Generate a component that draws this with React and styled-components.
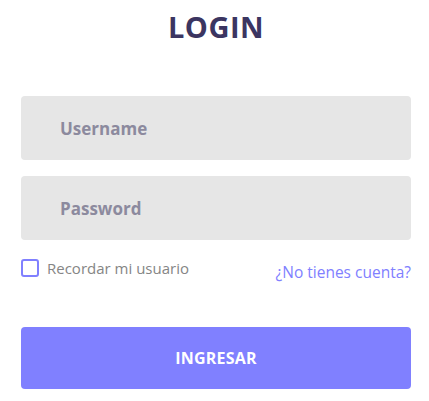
import React from "react";
import styled, { createGlobalStyle } from "styled-components";

const Global = createGlobalStyle`
  html, body { margin: 0; padding: 0; background: #ffffff; }
  body { font-family: "Open Sans", "Noto Sans", sans-serif; }
  * { box-sizing: border-box; }
`;

const Page = styled.div`
  width: 429px;
  padding: 0 18px 0 21px;
  display: flex;
  flex-direction: column;
`;

const Title = styled.h1`
  margin: 9px 0 0;
  text-align: center;
  font-size: 29px;
  line-height: 36px;
  font-weight: 700;
  color: #3b3561;
  letter-spacing: 0.5px;
`;

const Form = styled.form`
  margin-top: 51px;
  display: flex;
  flex-direction: column;
  gap: 16px;
`;

const Input = styled.input`
  width: 100%;
  height: 64px;
  border: none;
  border-radius: 4px;
  background: #e6e6e6;
  padding: 0 0 0 39px;
  font-family: inherit;
  font-size: 17px;
  font-weight: 700;
  color: #55536b;
  outline: none;
  &::placeholder { color: #8c8a9e; opacity: 1; }
`;

const Row = styled.div`
  display: flex;
  justify-content: space-between;
  align-items: flex-start;
  margin-top: 18px;
`;

const CheckLabel = styled.label`
  display: flex;
  align-items: center;
  gap: 8px;
  font-size: 15px;
  color: #858585;
  line-height: 20px;
`;

const Box = styled.span`
  width: 18px;
  height: 18px;
  border: 2px solid #8080ff;
  border-radius: 3px;
  display: inline-block;
`;

const Link = styled.a`
  margin-top: 4px;
  font-size: 15.5px;
  line-height: 20px;
  color: #8080ff;
  text-decoration: none;
`;

const Button = styled.button`
  margin-top: 45px;
  height: 62px;
  width: 100%;
  border: none;
  border-radius: 4px;
  background: #8080ff;
  color: #ffffff;
  font-family: inherit;
  font-size: 16px;
  font-weight: 700;
  letter-spacing: 0.2px;
`;

export default function App() {
  return (
    <>
      <Global />
      <Page>
        <Title>LOGIN</Title>
        <Form onSubmit={(e) => e.preventDefault()}>
          <Input placeholder="Username" />
          <Input placeholder="Password" type="password" />
        </Form>
        <Row>
          <CheckLabel>
            <Box />
            Recordar mi usuario
          </CheckLabel>
          <Link href="#">¿No tienes cuenta?</Link>
        </Row>
        <Button>INGRESAR</Button>
      </Page>
    </>
  );
}
